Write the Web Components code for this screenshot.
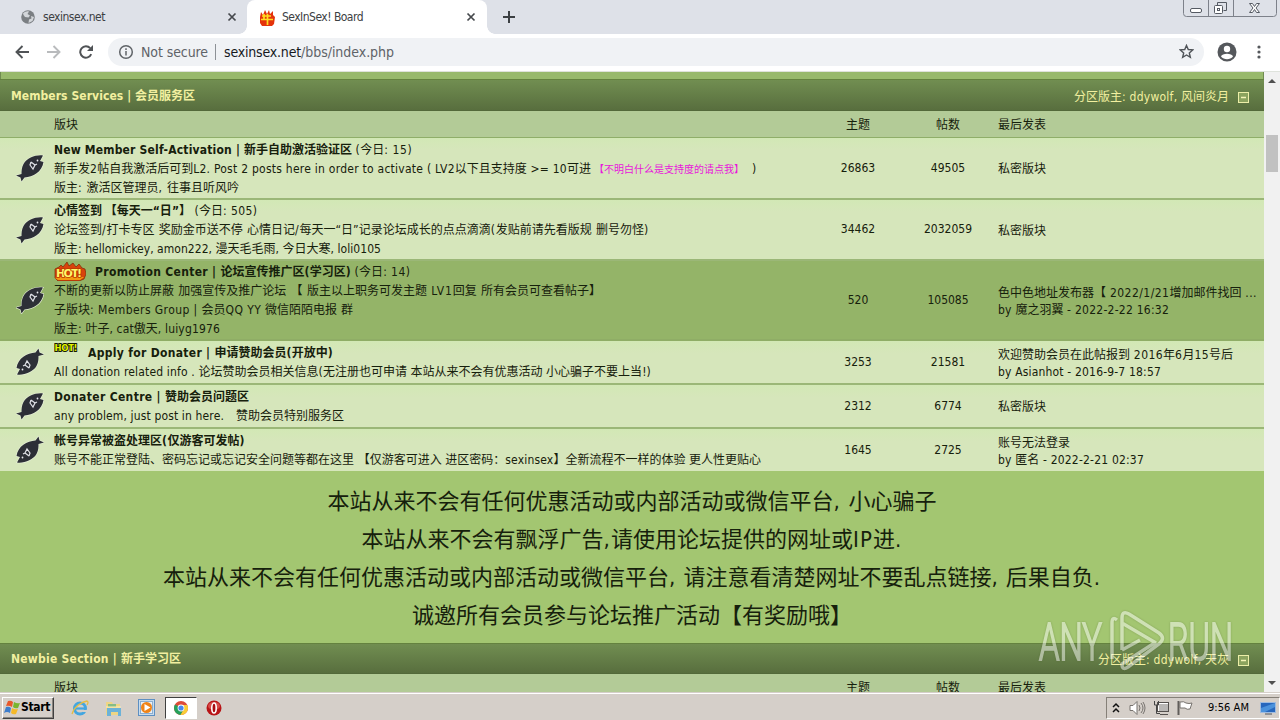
<!DOCTYPE html>
<html lang="zh">
<head>
<meta charset="utf-8">
<title>SexInSex! Board</title>
<style>
    html, body { margin: 0; height: 100%; overflow: hidden; }
    body {
        display: flex;
        flex-direction: column;
        font: 12px/19px "DejaVu Sans Condensed", "Noto Sans CJK SC", sans-serif;
        color: #16200c;
        background: #fff;
    }
</style>
</head>
<body>
<tab-strip></tab-strip>
<address-bar></address-bar>
<page-view>
    <forum-section heading="Members Services | 会员服务区" heading-width="184" mods="分区版主: ddywolf, 风间炎月" mods-width="155">
        <forum-row style="height:62px" topics="26863" posts="49505">
            <div><b><fit-text w="298">New Member Self-Activation | 新手自助激活验证区</fit-text></b> <fit-text w="57">(今日: 15)</fit-text></div>
            <div><fit-text w="537">新手发2帖自我激活后可到L2. Post 2 posts here in order to activate ( LV2以下且支持度 &gt;= 10可进</fit-text><fit-text style="font-size:10px;color:#e815dc;margin:0 8px 0 3px" w="150">【不明白什么是支持度的请点我】</fit-text>)</div>
            <div><fit-text w="185">版主: 激活区管理员, 往事且听风吟</fit-text></div>
            <span slot="last">私密版块</span>
        </forum-row>
        <forum-row style="height:61px" topics="34462" posts="2032059">
            <div><b><fit-text w="137">心情签到 【每天一“日”】</fit-text></b> <fit-text w="63">(今日: 505)</fit-text></div>
            <div><fit-text w="595">论坛签到/打卡专区 奖励金币送不停 心情日记/每天一“日”记录论坛成长的点点滴滴(发贴前请先看版规 删号勿怪)</fit-text></div>
            <div><fit-text w="327">版主: hellomickey, amon222, 漫天毛毛雨, 今日大寒, loli0105</fit-text></div>
            <span slot="last">私密版块</span>
        </forum-row>
        <forum-row class="hot" style="height:80px" topics="520" posts="105085">
            <div><hot-badge></hot-badge><b><fit-text w="256">Promotion Center | 论坛宣传推广区(学习区)</fit-text></b> <fit-text w="56">(今日: 14)</fit-text></div>
            <div><fit-text w="547">不断的更新以防止屏蔽 加强宣传及推广论坛 【 版主以上职务可发主题 LV1回复 所有会员可查看帖子】</fit-text></div>
            <div><fit-text w="299">子版块: Members Group | 会员QQ YY 微信陌陌电报 群</fit-text></div>
            <div><fit-text w="166">版主: 叶子, cat傲天, luiyg1976</fit-text></div>
            <fit-text slot="last" w="259">色中色地址发布器【 2022/1/21增加邮件找回 ...</fit-text>
            <fit-text slot="last" w="171">by 魔之羽翼 - 2022-2-22 16:32</fit-text>
        </forum-row>
        <forum-row fish="down" style="height:44px" topics="3253" posts="21581">
            <div><hot-badge small></hot-badge><b><fit-text w="245">Apply for Donater | 申请赞助会员(开放中)</fit-text></b></div>
            <div><fit-text w="597">All donation related info . 论坛赞助会员相关信息(无注册也可申请 本站从来不会有优惠活动 小心骗子不要上当!)</fit-text></div>
            <fit-text slot="last" w="235">欢迎赞助会员在此帖报到 2016年6月15号后</fit-text>
            <fit-text slot="last" w="163">by Asianhot - 2016-9-7 18:57</fit-text>
        </forum-row>
        <forum-row style="height:44px" topics="2312" posts="6774">
            <div><b><fit-text w="195">Donater Centre | 赞助会员问题区</fit-text></b></div>
            <div><fit-text w="290">any problem, just post in here.　赞助会员特别服务区</fit-text></div>
            <span slot="last">私密版块</span>
        </forum-row>
        <forum-row class="end" fish="down" style="height:42px" topics="1645" posts="2725">
            <div><b><fit-text w="191">帐号异常被盗处理区(仅游客可发帖)</fit-text></b></div>
            <div><fit-text w="707">账号不能正常登陆、密码忘记或忘记安全问题等都在这里 【仅游客可进入 进区密码：sexinsex】全新流程不一样的体验 更人性更贴心</fit-text></div>
            <span slot="last">账号无法登录</span>
            <fit-text slot="last" w="146">by 匿名 - 2022-2-21 02:37</fit-text>
        </forum-row>
    </forum-section>
    <forum-notice>
        <fit-text w="609">本站从来不会有任何优惠活动或内部活动或微信平台, 小心骗子</fit-text>
        <fit-text w="541">本站从来不会有飘浮广告,请使用论坛提供的网址或IP进.</fit-text>
        <fit-text w="938">本站从来不会有任何优惠活动或内部活动或微信平台, 请注意看清楚网址不要乱点链接, 后果自负.</fit-text>
        <fit-text w="440">诚邀所有会员参与论坛推广活动【有奖励哦】</fit-text>
    </forum-notice>
    <forum-section style="--head:31px" heading="Newbie Section | 新手学习区" heading-width="170" mods="分区版主: ddywolf, 天灰" mods-width="131"></forum-section>
</page-view>
<task-bar></task-bar>
<water-mark></water-mark>

<script>
class TabStrip extends HTMLElement {
    constructor() {
        super();
        this.attachShadow({ mode: 'open' }).innerHTML = `
            <style>
                :host { display: flex; height: 34px; flex: none; background: #dee1e8; color: #3c4043; }
                .tab { box-sizing: border-box; display: flex; flex: none; align-items: center; width: 240px; height: 34px; padding: 0 11px 0 12px; }
                .idle { width: 247px; padding: 0 10px 0 20px; }
                .tab svg { display: block; flex: none; }
                .tab fit-text { margin-left: 7px; }
                .tab .x { margin-left: auto; }
                .active { position: relative; background: #fff; border-radius: 8px 8px 0 0; }
                .active::before, .active::after { content: ""; position: absolute; bottom: 0; width: 8px; height: 8px; }
                .active::before { left: -8px; background: radial-gradient(circle at 0 0, transparent 7.5px, #fff 8px); }
                .active::after { right: -8px; background: radial-gradient(circle at 100% 0, transparent 7.5px, #fff 8px); }
                .plus { margin: 10px 0 0 15px; }
                .win { margin: 0 3px 0 auto; }
            </style>
            <div class="tab idle">
                <svg width="16" height="16" viewBox="0 0 16 16"><circle cx="8" cy="8" r="6.800" fill="#7b7f83"/><path d="M3 4.500C5 2 8 1.800 9 2.500L7.500 5 10 6.500 8.500 8.500 5 8 3.500 6ZM11 7l3 1-1.500 4-4 2 .5-3.500 2.500-1Z" fill="#d3d6da"/></svg>
                <fit-text w="62">sexinsex.net</fit-text>
                <svg class="x" width="10" height="10"><path d="M1.500 1.500l7 7m0-7l-7 7" stroke="#45484c" stroke-width="1.700"/></svg>
            </div>
            <div class="tab active">
                <svg width="16" height="17" viewBox="0 0 16 17"><path d="M1 8L2 3l2 3 2-5 2 4 2-4 1 4 3-3 0 4 2 2-1 7-2 2H3l-2-3Z" fill="#e4330b"/><path d="M5 5v5m-2-3h9M2 10.500h12M8.500 5v11" stroke="#ffdd20" stroke-width="1.700"/></svg>
                <fit-text w="81">SexInSex! Board</fit-text>
                <svg class="x" width="10" height="10"><path d="M1.500 1.500l7 7m0-7l-7 7" stroke="#45484c" stroke-width="1.700"/></svg>
            </div>
            <svg class="plus" width="14" height="14"><path d="M7 1v12M1 7h12" stroke="#3c4043" stroke-width="2"/></svg>
            <svg class="win" width="94" height="17" fill="none" stroke="#7d818a">
                <path d="M.5 0v13.500q0 3 3 3h87q3 0 3-3V0M25.500 0v16M50.500 0v16"/>
                <g stroke="#555a63"><rect x="7.500" y="8.500" width="11" height="4" rx="1.500" fill="#fff"/><path d="M34.500 5.500v-3h9v8h-3"/><rect x="31.500" y="5.500" width="8" height="8" rx="1" fill="#fff"/><rect x="34.500" y="8.500" width="2" height="2"/><path d="M66.500 3.500h3l2 3 2-3h3l-3.500 4.500 3.500 4.500h-3l-2-3-2 3h-3l3.500-4.500Z" fill="#fff"/></g>
            </svg>`;
    }
}

class AddressBar extends HTMLElement {
    constructor() {
        super();
        this.attachShadow({ mode: 'open' }).innerHTML = `
            <style>
                :host { display: flex; align-items: center; box-sizing: border-box; height: 38px; flex: none; padding: 0 13px 2px 15px; background: #fff; border-bottom: 1px solid #dfe3dc; font-size: 14px; color: #5f6368; }
                svg { display: block; flex: none; }
                .nav { display: flex; gap: 18px; margin-right: 15px; }
                .box { flex: 1; box-sizing: border-box; display: flex; align-items: center; height: 28px; padding: 0 10px; border-radius: 14px; background: #f0f2f5; }
                .box fit-text { padding-top: 1px; }
                .not { margin-left: 7px; }
                .bar { width: 1px; height: 16px; margin: 0 8px 0 7px; background: #8d9196; }
                .host { color: #16191d; }
                .star { margin-left: auto; }
                .user { margin: 0 14px 0 13px; }
            </style>
            <div class="nav">
                <svg width="14" height="14" fill="none" stroke="#505356" stroke-width="1.900"><path d="M14 7H1.500M7.500 1L1.500 7l6 6"/></svg>
                <svg width="14" height="14" fill="none" stroke="#b9bbbd" stroke-width="1.900"><path d="M0 7h12.500M6.500 1l6 6-6 6"/></svg>
                <svg width="14" height="14" fill="none" stroke="#505356" stroke-width="2"><path d="M12.200 9.200A5.700 5.700 0 1 1 11.200 3.200"/><path d="M14 0v6H8Z" fill="#505356" stroke="none"/></svg>
            </div>
            <div class="box">
                <svg width="16" height="16" fill="none" stroke="#606468" stroke-width="1.500"><circle cx="8" cy="8" r="6.300"/><path d="M8 7v4.500M8 4.300v1.600"/></svg>
                <fit-text class="not" w="67">Not secure</fit-text><span class="bar"></span>
                <fit-text class="host" w="77">sexinsex.net</fit-text><fit-text w="93">/bbs/index.php</fit-text>
                <svg class="star" width="15" height="15" viewBox="0 0 16 16" fill="none" stroke="#505459" stroke-width="1.500"><path d="M8 1.500l1.900 4.400 4.700.4-3.600 3.200 1.100 4.700L8 11.700l-4.100 2.500L5 9.500 1.400 6.300l4.700-.4Z"/></svg>
            </div>
            <svg class="user" width="20" height="20"><circle cx="10" cy="10" r="9.500" fill="#55585c"/><circle cx="10" cy="7" r="3.200" fill="#fff"/><path d="M4 14.500C5 10.800 15 10.800 16 14.500 13 18 7 18 4 14.500Z" fill="#fff"/></svg>
            <svg width="16" height="16" fill="#55585c"><circle cx="8" cy="3" r="1.600"/><circle cx="8" cy="8" r="1.600"/><circle cx="8" cy="13" r="1.600"/></svg>`;
    }
}

// Scrolled document plus its scrollbar
class PageView extends HTMLElement {
    constructor() {
        super();
        this.attachShadow({ mode: 'open' }).innerHTML = `
            <style>
                :host { display: flex; height: 620px; flex: none; overflow: hidden; }
                main { width: 1264px; height: 620px; overflow: hidden; background: #a3c671; }
                .prev { box-sizing: border-box; height: 7px; background: #98b96c; border: solid #708c50; border-width: 0 1px; }
                .scroll { display: flex; flex-direction: column; align-items: center; width: 16px; background: #f1f1f1; }
                .thumb { width: 12px; height: 37px; margin: 52px 0 auto; background: #c1c1c1; }
                svg { display: block; }
            </style>
            <main><div class="prev"></div><slot></slot></main>
            <div class="scroll">
                <svg style="margin-top:7px" width="8" height="4"><path d="M0 4l4-4 4 4Z" fill="#505050"/></svg>
                <div class="thumb"></div>
                <svg style="margin-bottom:7px" width="8" height="4"><path d="M0 0h8L4 4Z" fill="#505050"/></svg>
            </div>`;
    }
}

class ForumSection extends HTMLElement {
    constructor() {
        super();
        const a = name => this.getAttribute(name);
        this.attachShadow({ mode: 'open' }).innerHTML = `
            <style>
                :host { display: block; }
                header { box-sizing: border-box; display: flex; align-items: center; height: var(--head, 32px); padding: 2px 15px 0 11px; color: #f2f0a0; background: linear-gradient(#718e51, #586e3e); border-top: 1px solid #64823f; border-bottom: 1px solid #53693a; }
                .mods { margin: 2px 9px 0 auto; }
                svg { display: block; margin-top: 2px; }
                .cols { box-sizing: border-box; display: grid; grid-template-columns: 54px 759px 90px 90px 1fr; align-items: center; height: 27px; background: #b3cb97; border-bottom: 1px solid #8fae69; padding-top: 2px; }
                .cols span { text-align: center; }
                .cols .l { text-align: left; }
                .cols .last { text-align: left; padding-left: 5px; }
            </style>
            <header>
                <b><fit-text w="${a('heading-width')}">${a('heading')}</fit-text></b>
                <fit-text class="mods" w="${a('mods-width')}">${a('mods')}</fit-text>
                <svg width="11" height="11"><rect x=".5" y=".5" width="10" height="10" fill="#8ba35e" stroke="#eceea8"/><path d="M3 5.500h5" stroke="#f4f4b8" stroke-width="1.500"/></svg>
            </header>
            <div class="cols"><span></span><span class="l">版块</span><span>主题</span><span>帖数</span><span class="last">最后发表</span></div>
            <slot></slot>`;
    }
}

class ForumRow extends HTMLElement {
    constructor() {
        super();
        const turn = this.getAttribute('fish') === 'down' ? 'rotate(180 14 14)' : '';
        this.attachShadow({ mode: 'open' }).innerHTML = `
            <style>
                :host { box-sizing: border-box; display: grid; grid-template-columns: 54px 759px 90px 90px 1fr; align-items: center; background: linear-gradient(#d2e8b5, #d6e6bb 12px); border-bottom: 2px solid #9bb777; }
                :host(.hot) { background: #94b468; border-color: #8fad66; }
                :host(.end) { border-bottom: 0; }
                .fish { display: block; margin-left: 16px; }
                .num { text-align: center; }
                .last { display: flex; flex-direction: column; align-items: flex-start; padding: 3px 0 0 5px; line-height: 17px; }
                .main { white-space: nowrap; margin-top: 2px; }
            </style>
            <svg class="fish" width="28" height="28" viewBox="0 0 28 28">
                <g transform="${turn}">
                    <path d="M27 1.500C20 .5 11 4 7.500 10 5.500 14 5.500 17 5.500 20L0 21.500 4.500 23.500l1 4 3-4C17 23 26 18 27.500 8L24 7Z" fill="#2d2f37" stroke="#e9f2db" stroke-width="1.200" paint-order="stroke"/>
                    <path d="M15 8l4 3 2-1M15 8l-1 3 3 4 2-4" fill="none" stroke="#dfe0e6" stroke-width="1.200"/>
                    <circle cx="21.500" cy="6.500" r=".9" fill="#e8e8ee"/>
                </g>
            </svg>
            <div class="main"><slot></slot></div>
            <div class="num">${this.getAttribute('topics')}</div>
            <div class="num">${this.getAttribute('posts')}</div>
            <div class="last"><slot name="last"></slot></div>`;
    }
}

class HotBadge extends HTMLElement {
    constructor() {
        super();
        const small = this.hasAttribute('small');
        const art = small
            ? `<svg width="24" height="10"><text x="0.500" y="8" textLength="23" font-size="8.500" fill="#e4f400" stroke="#151a00" stroke-width="1.800" paint-order="stroke">HOT!</text></svg>`
            : `<svg width="32" height="19"><path d="M1 7l4-2 2-2 2 2 4-5 2 4 4-3 3 4 3-3 3 4 3 1 1 5-2 5-5 2H4l-3-3Z" fill="#d9430c" stroke="#7c2904" stroke-width=".7"/><path d="M1 16l3 2h22l4-3-2 0H4Z" fill="#f39a12"/><text x="2" y="14.500" textLength="26" font-size="11" fill="#fff76a" stroke="#bd3900" stroke-width="1.500" paint-order="stroke">HOT!</text></svg>`;
        this.attachShadow({ mode: 'open' }).innerHTML = `
            <style>
                :host { display: inline-block; vertical-align: top; height: 19px; margin-right: ${small ? 10 : 9}px; }
                svg { display: block; margin-top: -1px; font-family: "DejaVu Sans", sans-serif; font-weight: bold; }
            </style>${art}`;
    }
}

class ForumNotice extends HTMLElement {
    constructor() {
        super();
        this.attachShadow({ mode: 'open' }).innerHTML = `
            <style>
                :host { box-sizing: border-box; display: flex; flex-direction: column; align-items: center; height: 172px; padding-top: 12px; font-size: 22px; line-height: 38px; background: #a3c671; }
            </style><slot></slot>`;
    }
}

class TaskBar extends HTMLElement {
    constructor() {
        super();
        this.attachShadow({ mode: 'open' }).innerHTML = `
            <style>
                :host { box-sizing: border-box; display: flex; align-items: center; height: 28px; flex: none; padding: 2px 0 0 2px; background: #d5cfc9; border-top: 1px solid #d5cfc9; box-shadow: inset 0 1px #fff; color: #000; }
                svg { display: block; flex: none; }
                .start { box-sizing: border-box; display: flex; align-items: center; width: 52px; height: 22px; padding-left: 1px; border: 1px solid; border-color: #fff #404040 #404040 #fff; box-shadow: inset -1px -1px #8a8680; }
                .ie { margin-left: 17px; }
                .ex, .wm { margin-left: 16px; }
                .run { box-sizing: border-box; display: grid; place-items: center; width: 32px; height: 22px; margin: 0 9px 0 10px; background: #fff; border: 1px solid; border-color: #404040 #fff #fff #404040; }
                .tray { box-sizing: border-box; display: flex; align-items: center; height: 22px; width: 174px; margin-left: auto; padding-left: 5px; border: 1px solid; border-color: #858078 #fff #fff #858078; font-size: 11px; }
                .clock { margin-left: 15px; }
            </style>
            <div class="start">
                <svg width="17" height="17"><path d="M4 2Q7 1 9 3L8 8Q5 6 2 7Z" fill="#e8572a"/><path d="M10 3q3 2 6 1l-2 5q-3 1-5-1Z" fill="#79b52e"/><path d="M2 8q3-1 5 1l-1 5Q3 12 0 14Z" fill="#3d7dcc"/><path d="M8 9q3 2 6 1l-2 5q-3 1-5-1Z" fill="#f5b928"/></svg>
                <b><fit-text w="29">Start</fit-text></b>
            </div>
            <svg class="ie" width="18" height="18"><circle cx="9" cy="9.500" r="5.500" fill="none" stroke="#43a6e0" stroke-width="3"/><path d="M5 9.500h9" stroke="#43a6e0" stroke-width="2.200"/><path d="M12 11h5v2h-6Z" fill="#d5cfc9"/><path d="M1 15C3 8 10 3 16 2q2 1 0 4" fill="none" stroke="#e3bd45" stroke-width="1.300"/></svg>
            <svg class="ex" width="17" height="18"><path d="M1 3h6l1 2h7v11H1Z" fill="#eed585"/><path d="M3 5h8v3H3Z" fill="#85bd86"/><path d="M2 16V9h14v8h-3v-4H6v4H2Z" fill="#6cb2d8"/><path d="M1 8h15" stroke="#fbefbb"/></svg>
            <svg class="wm" width="17" height="17"><rect x=".5" y=".5" width="16" height="16" fill="#c8dced" stroke="#5d8fc2"/><rect x="2.500" y="2.500" width="12" height="12" fill="#e9f0f5" stroke="#8baed1"/><circle cx="8.500" cy="8.500" r="5.500" fill="#f08317"/><path d="M6.500 5l6 3.500-6 3.500Z" fill="#fff"/></svg>
            <div class="run"><svg width="14" height="14"><circle cx="7" cy="7" r="7" fill="#dd4b39"/><path d="M7 7L1 3.500A7 7 0 0 0 6.500 14l3.500-6Z" fill="#25a15b"/><path d="M7 4h6.300A7 7 0 0 1 6.500 14l3.500-6Z" fill="#f9cd36"/><circle cx="7" cy="7" r="3.400" fill="#fff"/><circle cx="7" cy="7" r="2.600" fill="#4688ee"/></svg></div>
            <svg width="16" height="16"><circle cx="8" cy="8" r="7.500" fill="#b81416"/><ellipse cx="8" cy="6" rx="6" ry="4" fill="#d74b48"/><ellipse cx="8" cy="8" rx="2.200" ry="5" fill="#a80b0f" stroke="#fff" stroke-width="1.600"/></svg>
            <div class="tray">
                <svg width="8" height="12" fill="none" stroke="#111" stroke-width="1.500"><path d="M1 5l3-3 3 3M1 10l3-3 3 3"/></svg>
                <svg style="margin-left:9px" width="17" height="16" fill="#fff" stroke="#77736f"><path d="M1 5.500h3l4-4v13l-4-4H1Z"/><path d="M10 5q2 3 0 6M12 3q4 5 0 10M14 2q4 6 0 12" fill="none"/></svg>
                <svg style="margin-left:7px" width="17" height="16" fill="none" stroke="#55514e"><rect x="5.500" y="3.500" width="10" height="8" fill="#b9b7b5" stroke="#fff"/><rect x="4.500" y="2.500" width="11" height="9"/><path d="M7 14.500h8"/><path d="M1.500 1v4h4V1M3.500 5v8.500H7" stroke="#444"/></svg>
                <svg style="margin-left:6px" width="17" height="16"><path d="M2.500 1v14" stroke="#615d5a" stroke-width="2"/><path d="M4 2q4-1 6 1 3 1 6 0l-2 6q-3 1-5-1H4Z" fill="#fff" stroke="#77736f"/></svg>
                <fit-text class="clock" w="41">9:56 AM</fit-text>
                <svg style="margin-left:11px" width="16" height="14"><rect x=".5" y="1.500" width="15" height="10" fill="#2767bd" stroke="#9ebbe0"/><path d="M1 7L15 2v4L5 11H1Z" fill="#4b92dc"/><path d="M5 13h7" stroke="#4c5563"/></svg>
            </div>`;
    }
}

class WaterMark extends HTMLElement {
    constructor() {
        super();
        this.attachShadow({ mode: 'open' }).innerHTML = `
            <style>
                :host { position: absolute; left: 1036px; top: 606px; opacity: .48; }
                svg { display: block; font: 300 52px Roboto, sans-serif; filter: drop-shadow(0 0 1px rgba(60, 80, 30, .6)); }
            </style>
            <svg width="200" height="70" fill="#fff">
                <text x="3" y="53.500" textLength="63" lengthAdjust="spacingAndGlyphs" stroke="#fff" stroke-width="2">ANY</text>
                <text x="132" y="53.500" textLength="65" lengthAdjust="spacingAndGlyphs" stroke="#fff" stroke-width="2">RUN</text>
                <path d="M81 14q-5-4-5 3v36M86 44V12q0-8 7-4l30 19q7 5 0 11L92 61q-6 4-6-3l34-22M86 17l34 20M86 44l18-10" fill="none" stroke="#fff" stroke-width="3.500"/>
            </svg>`;
    }
}

// One line of text set to a given width; the slack goes to the Latin runs,
// or to every character when the line has none.
class FitText extends HTMLElement {
    connectedCallback() {
        if (this.shadowRoot) return;
        const root = this.attachShadow({ mode: 'open' });
        root.innerHTML = `<style>
            :host { display: inline-block; white-space: nowrap; vertical-align: top; flex: none; }
            span { white-space: pre; }
        </style>`;
        const line = document.createElement('span');
        const latin = [];
        for (const part of this.textContent.match(/[\u0000-\u00ff“”]+|[^\u0000-\u00ff“”]+/g) || []) {
            const run = document.createElement('span');
            run.textContent = part;
            line.append(run);
            if (/[\u0000-\u00ff]/.test(part)) latin.push(run);
        }
        root.append(line);
        const target = Number(this.getAttribute('w'));
        if (!target) return;
        const runs = latin.length ? latin : [...line.children];
        const count = runs.reduce((n, run) => n + run.textContent.length, 0);
        const gap = (target - line.getBoundingClientRect().width) / count;
        runs.forEach(run => { run.style.letterSpacing = `${gap}px`; });
    }
}

customElements.define('tab-strip', TabStrip);
customElements.define('address-bar', AddressBar);
customElements.define('page-view', PageView);
customElements.define('forum-section', ForumSection);
customElements.define('forum-row', ForumRow);
customElements.define('hot-badge', HotBadge);
customElements.define('forum-notice', ForumNotice);
customElements.define('task-bar', TaskBar);
customElements.define('water-mark', WaterMark);
customElements.define('fit-text', FitText);
</script>
</body>
</html>
